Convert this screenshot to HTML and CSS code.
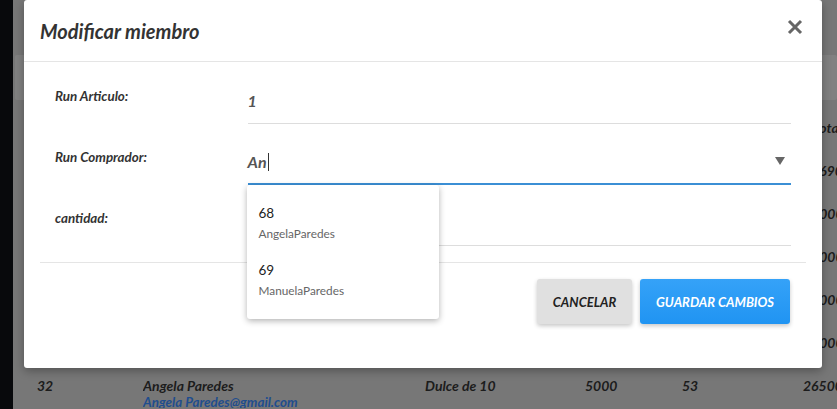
FILE: index.html
```html
<!DOCTYPE html>
<html lang="es">
<head>
<meta charset="utf-8">
<title>Modificar miembro</title>
<link rel="stylesheet" href="styles.css">
</head>
<body>
<div class="sidebar"></div>
<main class="main">
  <div class="search-card"></div>
  <div class="table">
    <div class="trow head"><span>#</span><span>Nombre</span><span>Articulo</span><span>Precio</span><span>Cant.</span><span class="total">Total</span></div>
    <div class="trow"><span>27</span><span>Pedro Soto</span><span>Chocolate</span><span>3000</span><span>23</span><span class="total">13690</span></div>
    <div class="trow"><span>28</span><span>Juan Perez</span><span>Galleta</span><span>1000</span><span>15</span><span class="total">15000</span></div>
    <div class="trow"><span>29</span><span>Maria Lopez</span><span>Caramelo</span><span>500</span><span>10</span><span class="total">25000</span></div>
    <div class="trow"><span>30</span><span>Luis Rojas</span><span>Chicle</span><span>200</span><span>50</span><span class="total">10000</span></div>
    <div class="trow"><span>31</span><span>Ana Diaz</span><span>Alfajor</span><span>800</span><span>25</span><span class="total">20000</span></div>
    <div class="trow"><span>32</span><span class="name">Angela Paredes<br><span class="email">Angela Paredes@gmail.com</span></span><span>Dulce de 10</span><span>5000</span><span>53</span><span class="total">265000</span></div>
  </div>
</main>

<div class="modal">
  <div class="modal-header">
    <h4 class="modal-title">Modificar miembro</h4>
    <span class="close" aria-label="Cerrar">
      <svg width="16" height="16" viewBox="0 0 16 16"><path d="M2 2 L14 14 M14 2 L2 14" stroke="#666" stroke-width="3" stroke-linecap="butt" fill="none"/></svg>
    </span>
  </div>
  <div class="modal-body">
    <div class="form-row">
      <label class="label">Run Articulo:</label>
      <div class="field"><div class="input">1</div></div>
    </div>
    <div class="form-row">
      <label class="label">Run Comprador:</label>
      <div class="field">
        <div class="input focused">An<span class="caret"></span>
          <svg class="arrow" width="10" height="8" viewBox="0 0 10 8"><path d="M0 0 H10 L5 8 Z" fill="#666"/></svg>
          <div class="dropdown">
            <div class="item"><div class="item-id">68</div><div class="item-name">AngelaParedes</div></div>
            <div class="item"><div class="item-id">69</div><div class="item-name">ManuelaParedes</div></div>
          </div>
        </div>
      </div>
    </div>
    <div class="form-row">
      <label class="label">cantidad:</label>
      <div class="field"><div class="input"></div></div>
    </div>
    <div class="divider"></div>
  </div>
  <div class="modal-footer">
    <button class="btn btn-cancel">CANCELAR</button>
    <button class="btn btn-save">GUARDAR CAMBIOS</button>
  </div>
</div>
</body>
</html>
```

FILE: styles.css
```css
* { box-sizing: border-box; }
html, body { margin: 0; padding: 0; }
body {
  width: 837px;
  height: 409px;
  overflow: hidden;
  display: flex;
  font-family: Lato, "Liberation Sans", sans-serif;
  background: #777;
  position: relative;
}
.sidebar { width: 13px; flex: none; background: #08090c; }
.main { flex: 1; padding-left: 2px; background: #777; }
.search-card {
  margin-top: 55px;
  height: 45px;
  background: #818181;
  border-radius: 2px;
}
.table { margin-top: 7px; margin-left: -2px; }
.trow {
  display: grid;
  grid-template-columns: 106px 282px 160px 97px 121px 1fr;
  padding-left: 24px;
  height: 43px;
  padding-top: 13px;
  font-size: 14px;
  line-height: 16px;
  font-weight: 700;
  font-style: italic;
  color: #1c1c1c;
  white-space: nowrap;
}
.trow > span { overflow: hidden; }
.trow .total { overflow: hidden; }
.trow.head .total { padding-left: 10px; }
.email { color: #1f4d8e; font-size: 13.4px; }

.modal {
  position: absolute;
  left: 24px;
  top: 0;
  width: 798px;
  height: 368px;
  background: #fff;
  border-radius: 3px;
  box-shadow: 0 3px 10px rgba(0,0,0,.3);
}
.modal-header {
  height: 62px;
  border-bottom: 1px solid #e5e5e5;
  display: flex;
  align-items: center;
  justify-content: space-between;
  padding: 0 19px 0 16px;
}
.modal-title {
  margin: 0;
  font-size: 20px;
  font-weight: 700;
  font-style: italic;
  color: #333;
  padding-top: 1px;
}
.close { display: flex; margin-top: -8px; }
.modal-body { padding: 1px 16px 0; }
.form-row {
  display: grid;
  grid-template-columns: 25% 75%;
  height: 61px;
}
.label {
  padding: 25px 15px 0;
  font-size: 13.4px;
  line-height: 16px;
  font-weight: 700;
  font-style: italic;
  color: #333;
}
.field { padding: 0 15px 0 16px; }
.input {
  position: relative;
  height: 61px;
  border-bottom: 1px solid #ddd;
  padding-top: 28px;
  font-size: 16px;
  line-height: 20px;
  font-weight: 700;
  font-style: italic;
  color: #555;
}
.input.focused { border-bottom: 2px solid #3b8fd5; }
.caret {
  display: inline-block;
  width: 1px;
  height: 18px;
  background: #333;
  vertical-align: -3px;
  margin-left: 1px;
}
.arrow { position: absolute; right: 6px; top: 33px; }
.dropdown {
  position: absolute;
  top: calc(100% + 2px);
  left: -1px;
  width: 192px;
  background: #fff;
  border-radius: 3px;
  box-shadow: 0 2px 6px rgba(0,0,0,.3);
  padding: 10px 0 10px;
  z-index: 2;
  font-style: normal;
  font-weight: 400;
}
.item { padding: 9px 12px 10px; }
.item-id { font-size: 13.5px; line-height: 18px; color: #222; }
.item-name { font-size: 11.8px; line-height: 16px; color: #666; margin-top: 4px; }
.divider { margin-top: 16px; height: 1px; background: #e5e5e5; }
.modal-footer {
  display: flex;
  justify-content: flex-end;
  gap: 8px;
  padding: 16px 32px 0 16px;
}
.btn {
  height: 45px;
  border: none;
  border-radius: 3px;
  font-family: Lato, "Liberation Sans", sans-serif;
  font-size: 13px;
  font-weight: 700;
  font-style: italic;
  padding: 0;
  box-shadow: 0 2px 4px rgba(0,0,0,.22);
}
.btn-cancel { width: 95px; background: #e0e0e0; color: #222; }
.btn-save { width: 150px; background: linear-gradient(#35a2f8, #2094f2); color: #fff; }
```
